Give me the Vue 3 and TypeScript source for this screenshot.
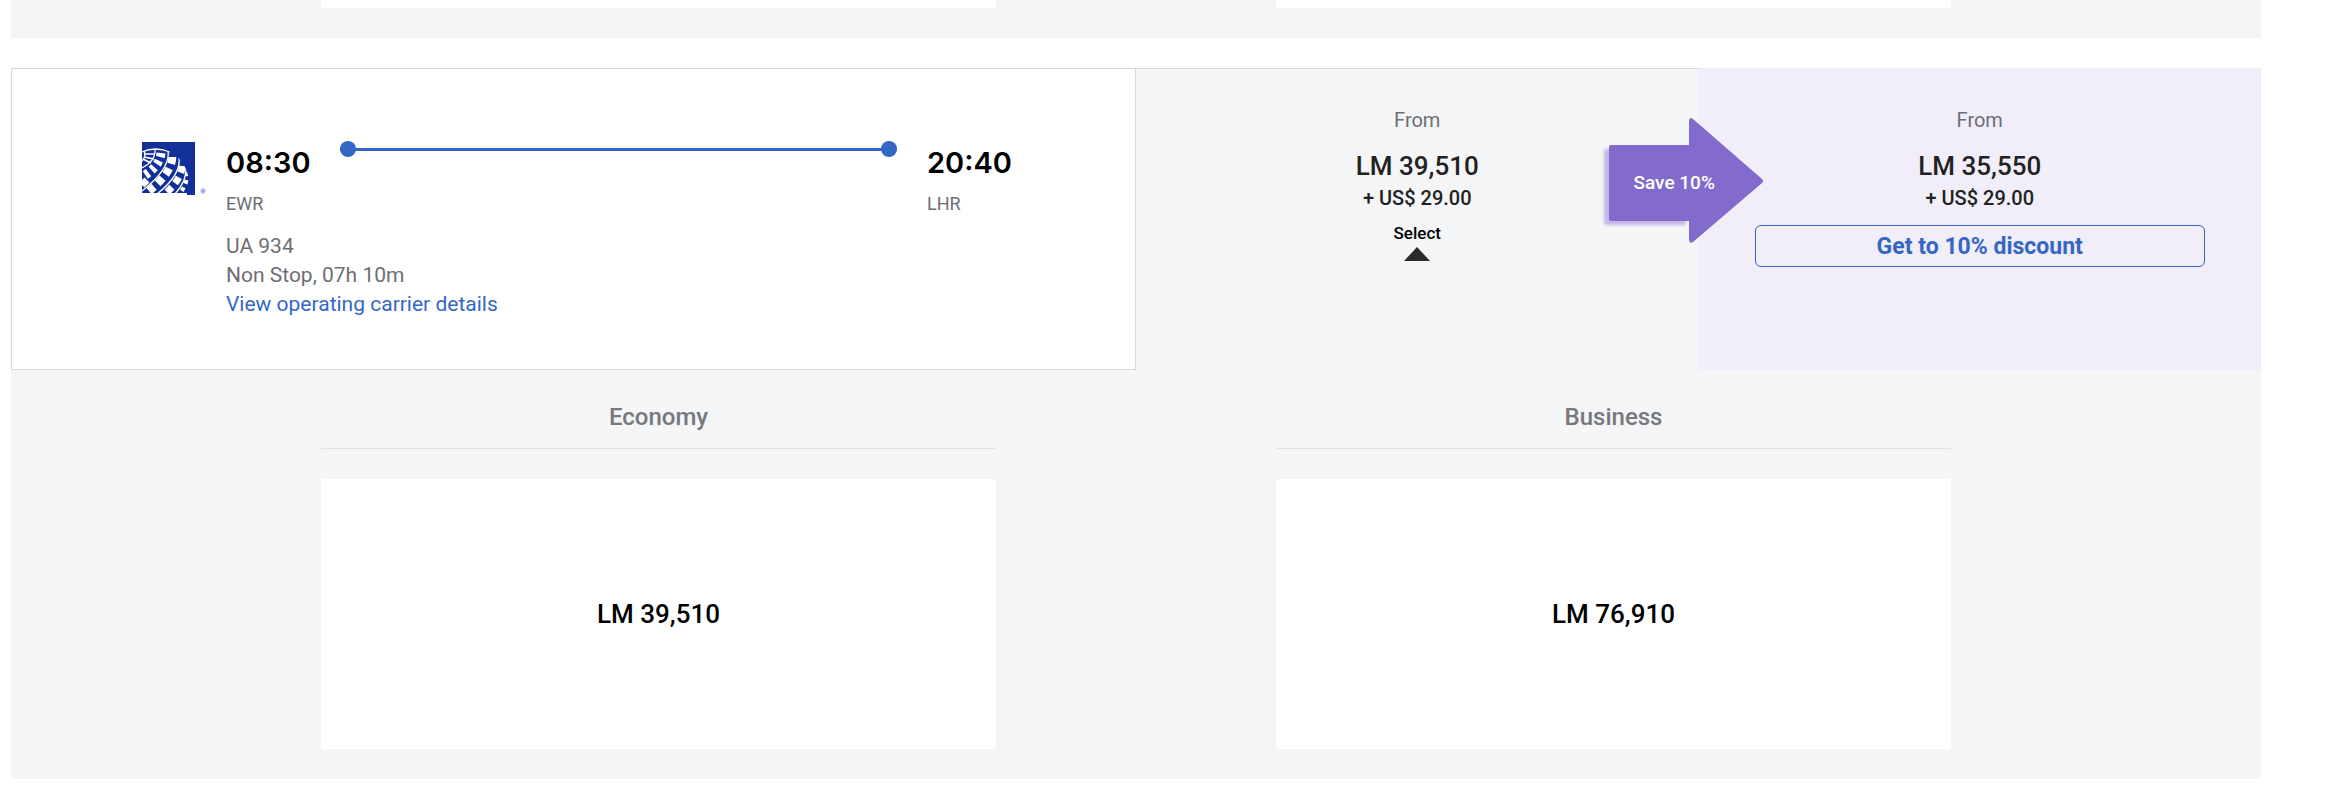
<script setup lang="ts">
interface Cabin {
  name: string
  price: string
}

const flight = {
  departs: '08:30',
  arrives: '20:40',
  from: 'EWR',
  to: 'LHR',
  number: 'UA 934',
  summary: 'Non Stop, 07h 10m',
}

const cabins: Cabin[] = [
  { name: 'Economy', price: 'LM 39,510' },
  { name: 'Business', price: 'LM 76,910' },
]
</script>

<template>
  <main class="results">
    <section class="previous" aria-hidden="true">
      <div class="previous-box"></div>
      <div class="previous-box"></div>
    </section>

    <article class="flight">
      <div class="summary">
        <section class="itinerary">
          <svg class="logo" viewBox="0 0 66 54" role="img" aria-label="United">
            <defs>
              <clipPath id="globe">
                <path d="M0 9 C5 6 11 5 17 6 C34 9 45 22 47 38 V54 H41 L39 51 H0 Z" />
              </clipPath>
            </defs>
            <path d="M0 0 H53 V53 H45 V51 H0 Z" fill="#12309a" />
            <g clip-path="url(#globe)" fill="none" stroke="#fff">
              <g stroke-width="1.3">
                <path d="M0 10 C8 6 19 6 28 10" />
                <path d="M2 9 C4 13 3 16 0 19" />
                <path d="M13 7 C14 15 9 21 0 26" />
                <path d="M26 9 C28 22 18 35 0 49" />
                <path d="M37 15 C39 28 29 41 15 52" />
                <path d="M44 25 C45 35 41 43 33 52" />
              </g>
              <path d="M2 12 H13 M2 15 L12 17 M1 17 L9 21" stroke-width="1.7" />
              <path d="M19 7 C20 19 12 28 0 35" stroke-width="9" stroke-dasharray="4 4" stroke-dashoffset="-4" />
              <path d="M30 12 C32 24 22 37 7 49" stroke-width="8" stroke-dasharray="7 5" stroke-dashoffset="-3" />
              <path d="M0 43 L5 38" stroke-width="7" />
              <path d="M40 19 C42 31 34 42 23 52" stroke-width="7" stroke-dasharray="7 5" stroke-dashoffset="-5" />
              <path d="M45 28 C46 38 43 45 37 53" stroke-width="4" stroke-dasharray="4 4" stroke-dashoffset="-2" />
            </g>
            <g fill="none" stroke="#7f90cd" stroke-width="0.8">
              <circle cx="61" cy="49" r="2.2" />
              <path d="M60.5 50.3 V47.9 H61.5 V49 H60.5 M61.3 49 L62 50.3" />
            </g>
          </svg>

          <div class="stop">
            <time class="clock">{{ flight.departs }}</time>
            <span class="airport">{{ flight.from }}</span>
          </div>
          <div class="route" aria-hidden="true"></div>
          <div class="stop">
            <time class="clock">{{ flight.arrives }}</time>
            <span class="airport">{{ flight.to }}</span>
          </div>

          <div class="details">
            <p>{{ flight.number }}</p>
            <p>{{ flight.summary }}</p>
            <p><a href="#carrier">View operating carrier details</a></p>
          </div>
        </section>

        <section class="fare">
          <span class="from">From</span>
          <strong class="miles">LM 39,510</strong>
          <span class="tax">+ US$ 29.00</span>
          <button class="select" type="button">
            Select
            <svg class="caret" viewBox="0 0 26 14" aria-hidden="true">
              <path d="M13 0 L26 14 H0 Z" fill="#2b2b2b" />
            </svg>
          </button>
        </section>

        <section class="fare discounted">
          <div class="saving">
            <svg class="arrow" viewBox="0 0 166 130" aria-hidden="true">
              <defs>
                <filter id="soft" x="-20%" y="-20%" width="140%" height="140%">
                  <feGaussianBlur stdDeviation="1.5" />
                </filter>
              </defs>
              <rect x="5" y="32" width="82" height="76" rx="2" fill="#c5b6e8" filter="url(#soft)" />
              <path
                d="M12 28 H90 V4 Q90 -0.5 94 2 L163 62 Q165 64 163 66 L94 125 Q90 127 90 123 V104 H12 Q10 104 10 102 V30 Q10 28 12 28 Z"
                fill="#836acd"
              />
            </svg>
            <span class="saving-text">Save 10%</span>
          </div>
          <span class="from">From</span>
          <strong class="miles">LM 35,550</strong>
          <span class="tax">+ US$ 29.00</span>
          <button class="discount" type="button">Get to 10% discount</button>
        </section>
      </div>

      <div class="cabins">
        <section v-for="cabin in cabins" :key="cabin.name" class="cabin">
          <h2>{{ cabin.name }}</h2>
          <div class="cabin-price">{{ cabin.price }}</div>
        </section>
      </div>
    </article>
  </main>
</template>

<style>
body {
  margin: 0;
  background: #fff;
}
</style>

<style scoped>
.results {
  padding: 0 85px 19px 11px;
  font-family: Roboto, "Liberation Sans", sans-serif;
  color: #6d6e74;
}

.previous,
.cabins {
  display: grid;
  grid-template-columns: 310fr 675fr 280fr 675fr 310fr;
  padding-bottom: 30px;
  background: #f3f5f7;
}

.previous > :first-child,
.cabins > :first-child {
  grid-column: 2;
}

.previous > :last-child,
.cabins > :last-child {
  grid-column: 4;
}

.previous-box {
  height: 8px;
  background: #fff;
}

.flight {
  margin-top: 30px;
  background: #f3f5f7;
}

.summary {
  display: grid;
  grid-template-columns: 2fr 1fr 1fr;
}

.itinerary {
  display: grid;
  grid-template-columns: 84px 84px 1fr 84px;
  align-items: start;
  padding: 72px 124px 50px 130px;
  border: 1px solid #d9d9d9;
  background: #fff;
}

.logo {
  width: 66px;
  height: 54px;
  margin-top: 1px;
}

.stop {
  display: flex;
  flex-direction: column;
  gap: 11px;
  padding-top: 4px;
}

.clock {
  font: 600 29px/36px Inter, sans-serif;
  color: #000;
}

.airport {
  font-size: 18px;
  line-height: 24px;
}

.route {
  display: flex;
  align-items: center;
  justify-content: space-between;
  height: 16px;
  margin: 0 30px;
  background: linear-gradient(#3467c5, #3467c5) center / 100% 3px no-repeat;
}

.route::before,
.route::after {
  content: "";
  width: 16px;
  height: 16px;
  border-radius: 50%;
  background: #3467c5;
}

.details {
  grid-column: 2 / -1;
  margin-top: 16px;
  font-size: 21px;
  line-height: 29px;
}

.details p {
  margin: 0;
}

.details a {
  color: #3467c5;
  text-decoration: none;
}

.fare {
  display: flex;
  flex-direction: column;
  align-items: center;
  padding-top: 39px;
  border-top: 1px solid #d9d9d9;
}

.discounted {
  position: relative;
  border-top-color: #f1edf9;
  background: #f1edf9;
}

.from {
  font-size: 20px;
  line-height: 24px;
}

.miles {
  margin-top: 18px;
  font-size: 26px;
  font-weight: 500;
  line-height: 32px;
  color: #222;
}

.tax {
  font-size: 20px;
  font-weight: 500;
  line-height: 32px;
  color: #222;
}

button {
  font-family: inherit;
  cursor: pointer;
}

.select {
  display: flex;
  flex-direction: column;
  align-items: center;
  gap: 5px;
  margin-top: 10px;
  padding: 0;
  border: 0;
  background: none;
  font-size: 17px;
  font-weight: 500;
  line-height: 18px;
  color: #000;
}

.caret {
  width: 26px;
  height: 14px;
}

.discount {
  width: 80%;
  height: 42px;
  margin-top: 11px;
  padding: 2px 0 0;
  border: 1px solid #3467c5;
  border-radius: 6px;
  background: none;
  font-size: 23px;
  font-weight: 700;
  line-height: 30px;
  color: #3467c5;
}

.saving {
  position: absolute;
  top: 48px;
  left: -100px;
  display: grid;
  align-items: center;
  width: 166px;
  height: 130px;
}

.arrow,
.saving-text {
  grid-area: 1 / 1;
}

.saving-text {
  padding: 2px 0 0 35px;
  font-size: 19px;
  font-weight: 500;
  line-height: 24px;
  color: #fff;
}

.cabins {
  padding-top: 31px;
}

h2 {
  margin: 0 0 30px;
  padding-bottom: 15px;
  border-bottom: 1px solid #e1e2e5;
  font-size: 24px;
  font-weight: 500;
  line-height: 32px;
  text-align: center;
  color: #77787c;
}

.cabin-price {
  display: flex;
  align-items: center;
  justify-content: center;
  height: 270px;
  background: #fff;
  font-size: 26px;
  font-weight: 500;
  line-height: 32px;
  color: #000;
}
</style>
